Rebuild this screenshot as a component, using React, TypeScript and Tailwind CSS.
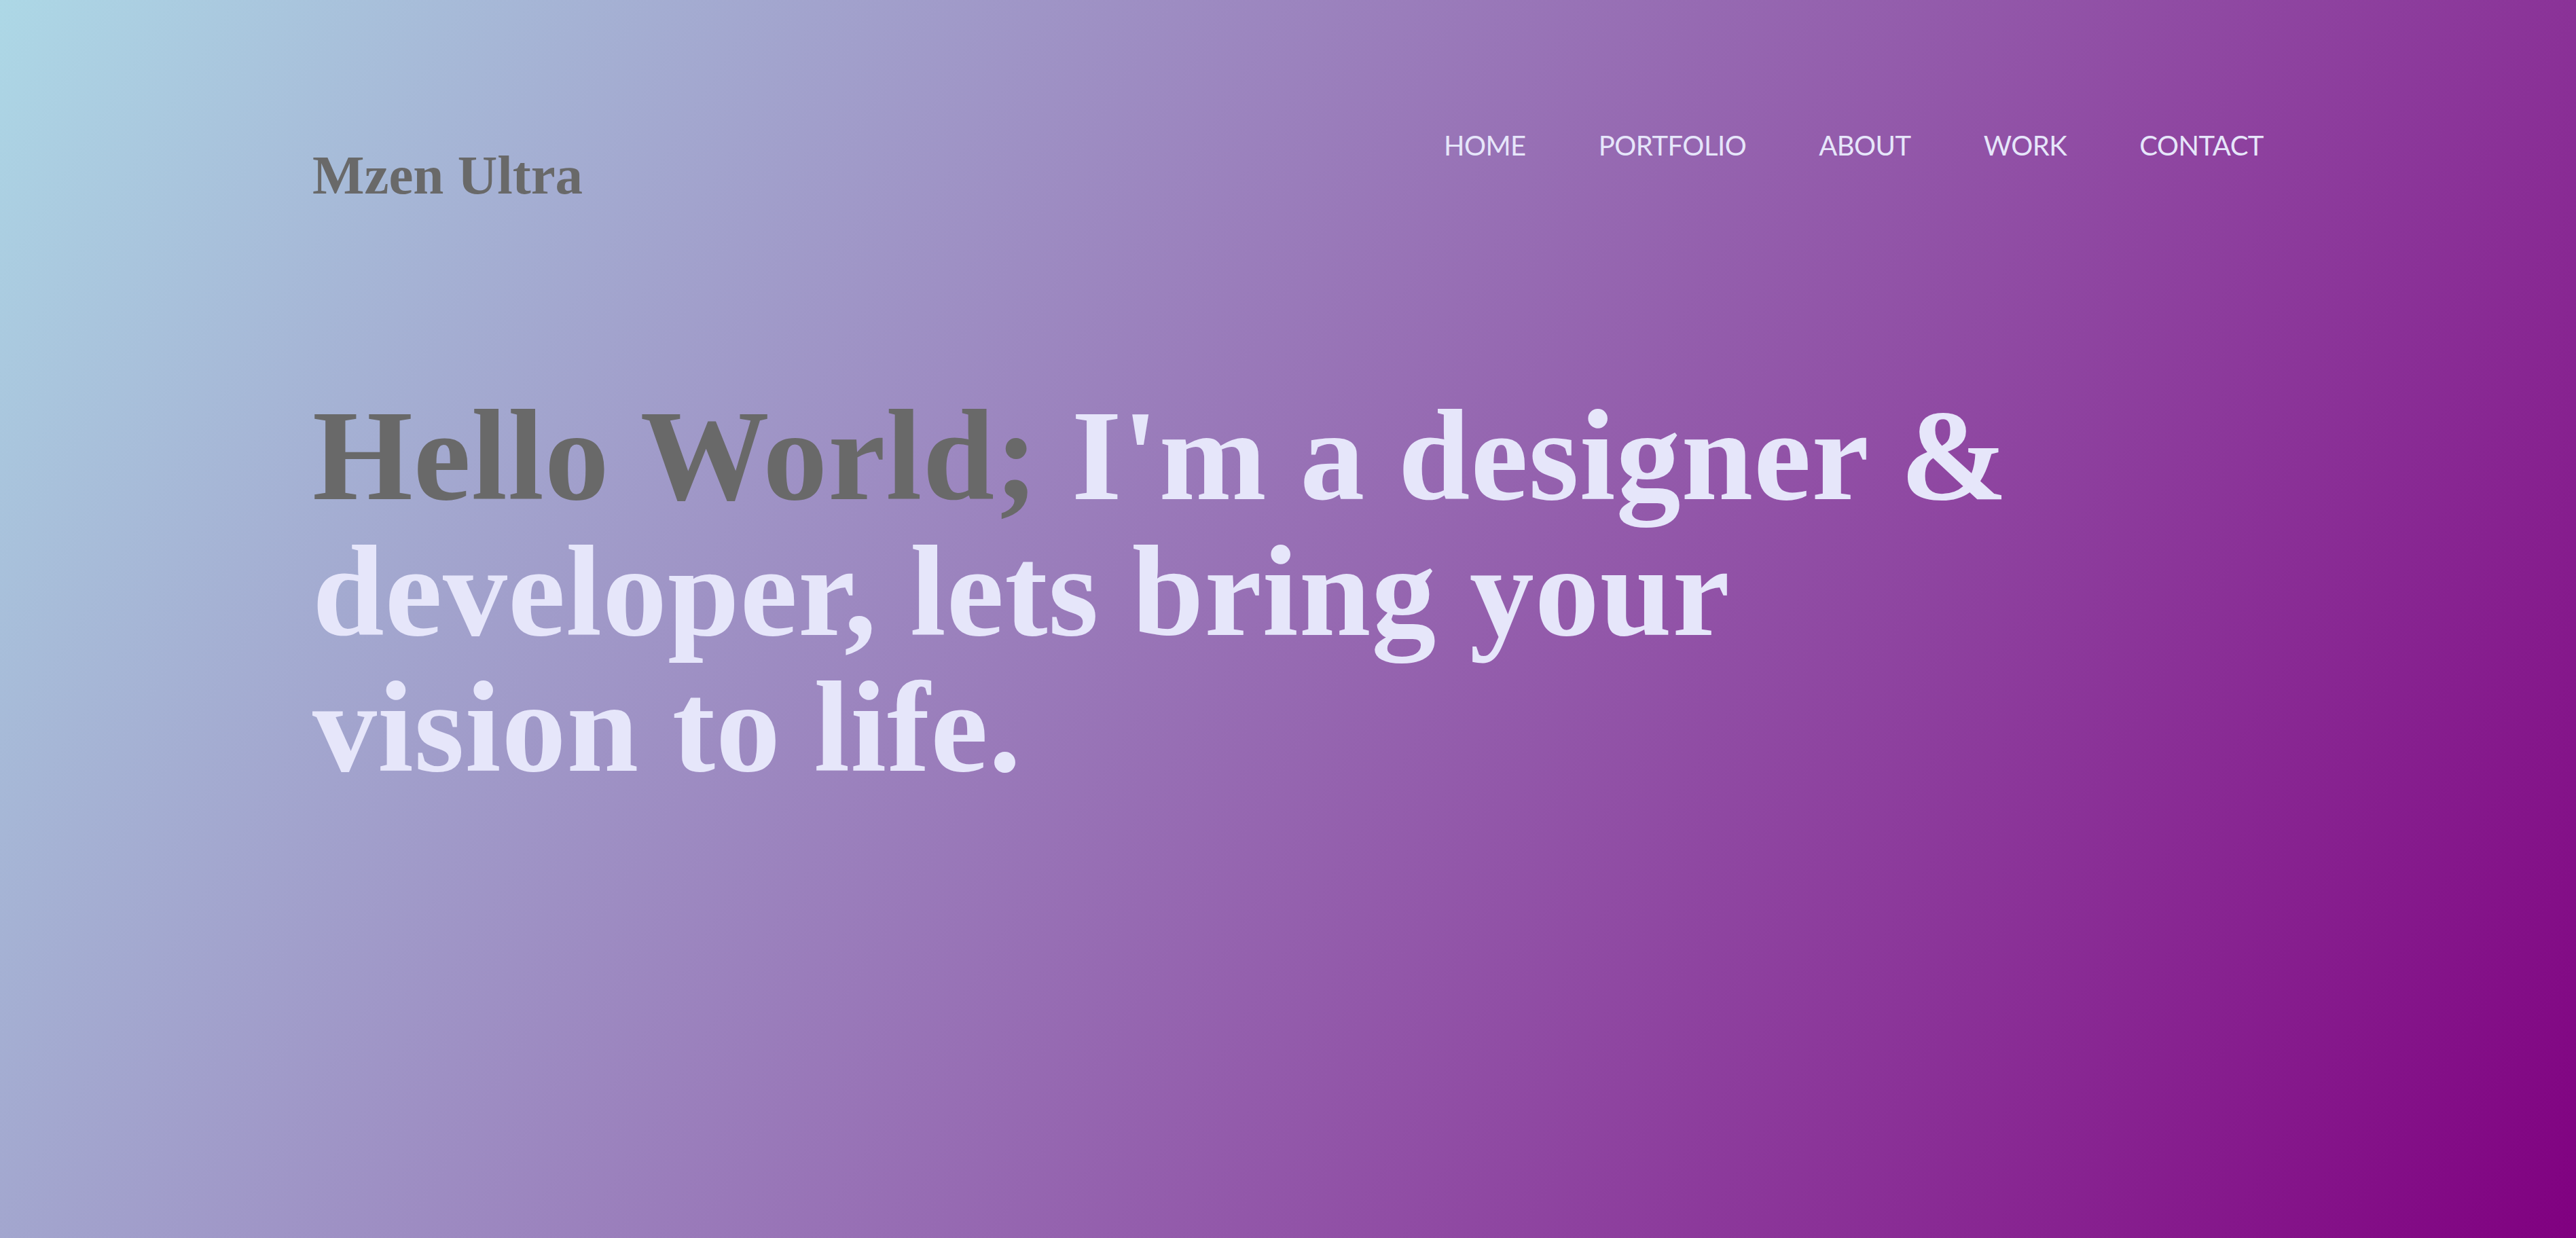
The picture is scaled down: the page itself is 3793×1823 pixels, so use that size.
const links = ["HOME", "PORTFOLIO", "ABOUT", "WORK", "CONTACT"];

export default function App() {
  return (
    <div className="min-h-screen w-full bg-[linear-gradient(122deg,#add8e6,#800080)]">
      <header className="flex items-start justify-between px-[460px] pt-[190px]">
        <div className="pt-[28px]">
          <a
            href="#"
            className="block font-['Liberation_Serif',serif] text-[81px] font-bold leading-[80px] text-[#696969]"
          >
            Mzen Ultra
          </a>
        </div>
        <nav className="flex items-start gap-[107px]">
          {links.map((link) => (
            <a
              key={link}
              href="#"
              className="font-['Lato',sans-serif] text-[40px] leading-[1.2] tracking-[-0.5px] text-[#e6e6fa]"
            >
              {link}
            </a>
          ))}
        </nav>
      </header>

      <main className="px-[460px] pt-[273px]">
        <h1 className="font-['Liberation_Serif',serif] text-[190px] font-bold leading-[200px] tracking-[1px] text-[#e6e6fa]">
          <span className="text-[#696969]">Hello World;</span> I'm a designer &amp;
          <br />
          developer, lets bring your
          <br />
          vision to life.
        </h1>
      </main>
    </div>
  );
}
